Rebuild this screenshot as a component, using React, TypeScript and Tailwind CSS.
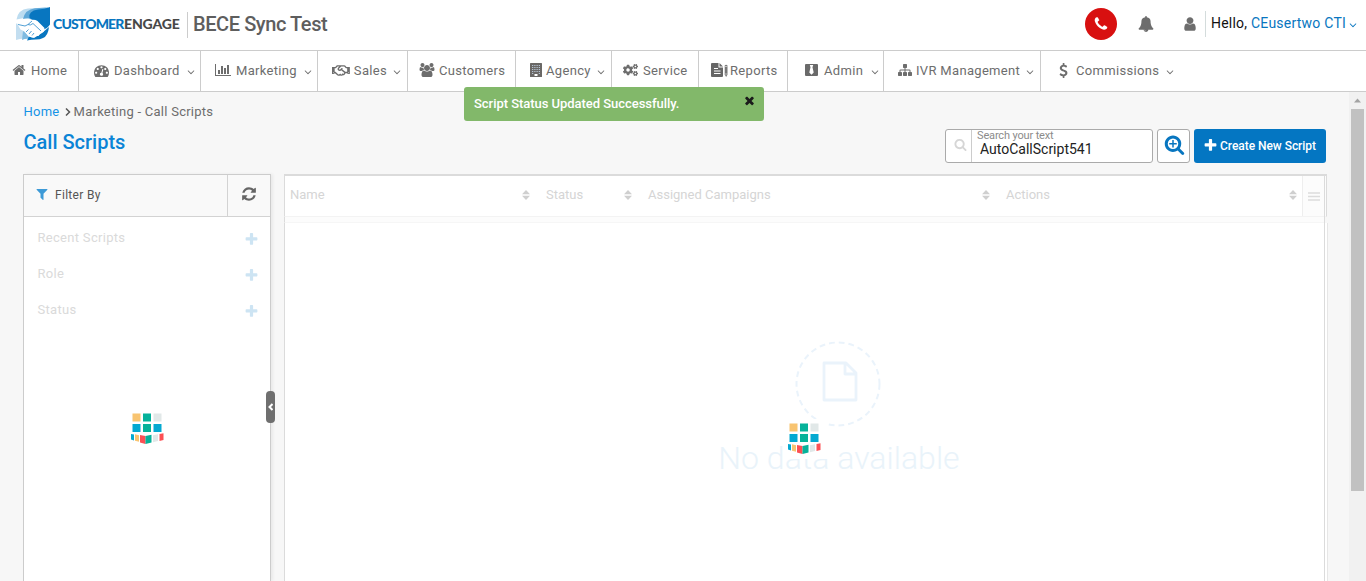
import React from "react";
import { FaCogs, FaRegHandshake } from "react-icons/fa";

const P = {
  home: "M1472 992v480q0 26-19 45t-45 19h-384v-384h-256v384h-384q-26 0-45-19t-19-45v-480q0-1 .5-3t.5-3l575-474 575 474q1 2 1 6zm223-69l-62 74q-8 9-21 11h-3q-13 0-21-7l-692-577-692 577q-12 8-24 7-13-2-21-11l-62-74q-8-10-7-23.5t11-21.5l719-599q32-26 76-26t76 26l244 204v-195q0-14 9-23t23-9h192q14 0 23 9t9 23v408l219 182q10 8 11 21.5t-7 23.5z",
  dash: "M384 1152q0-53-37.5-90.5t-90.5-37.5-90.5 37.5-37.5 90.5 37.5 90.5 90.5 37.5 90.5-37.5 37.5-90.5zm192-448q0-53-37.5-90.5t-90.5-37.5-90.5 37.5-37.5 90.5 37.5 90.5 90.5 37.5 90.5-37.5 37.5-90.5zm428 481l101-382q6-26-7.5-48.5t-38.5-29.5-48 6.5-30 39.5l-101 382q-60 5-107 43.5t-63 98.5q-20 77 20 146t117 89 146-20 89-117q16-60-6-117t-72-91zm660-33q0-53-37.5-90.5t-90.5-37.5-90.5 37.5-37.5 90.5 37.5 90.5 90.5 37.5 90.5-37.5 37.5-90.5zm-640-640q0-53-37.5-90.5t-90.5-37.5-90.5 37.5-37.5 90.5 37.5 90.5 90.5 37.5 90.5-37.5 37.5-90.5zm448 192q0-53-37.5-90.5t-90.5-37.5-90.5 37.5-37.5 90.5 37.5 90.5 90.5 37.5 90.5-37.5 37.5-90.5zm320 448q0 261-141 483-19 29-54 29h-1402q-35 0-54-29-141-221-141-483 0-182 71-348t191-286 286-191 348-71 348 71 286 191 191 286 71 348z",
  chart: "M640 896v512h-256v-512h256zm384-512v1024h-256v-1024h256zm1024 1152v128h-2048v-1536h128v1408h1920zm-640-896v768h-256v-768h256zm384-384v1152h-256v-1152h256z",
  sitemap: "M1792 1248v320q0 40-28 68t-68 28h-320q-40 0-68-28t-28-68v-320q0-40 28-68t68-28h96v-192h-512v192h96q40 0 68 28t28 68v320q0 40-28 68t-68 28h-320q-40 0-68-28t-28-68v-320q0-40 28-68t68-28h96v-192h-512v192h96q40 0 68 28t28 68v320q0 40-28 68t-68 28h-320q-40 0-68-28t-28-68v-320q0-40 28-68t68-28h96v-192q0-52 38-90t90-38h512v-192h-96q-40 0-68-28t-28-68v-320q0-40 28-68t68-28h320q40 0 68 28t28 68v320q0 40-28 68t-68 28h-96v192h512q52 0 90 38t38 90v192h96q40 0 68 28t28 68z",
  bell: "M912 1696q0-16-16-16-59 0-101.5-42.5t-42.5-101.5q0-16-16-16t-16 16q0 73 51.5 124.5t124.5 51.5q16 0 16-16zm816-288q0 52-38 90t-90 38h-448q0 106-75 181t-181 75-181-75-75-181h-448q-52 0-90-38t-38-90q50-42 91-88t85-119.5 74.5-158.5 50-206 19.5-260q0-152 117-282.5t307-158.5q-8-19-8-39 0-40 28-68t68-28 68 28 28 68q0 20-8 39 190 28 307 158.5t117 282.5q0 139 19.5 260t50 206 74.5 158.5 85 119.5 91 88z",
  user: "M1536 1399q0 109-62.5 187t-150.5 78h-854q-88 0-150.5-78t-62.5-187q0-85 8.5-160.5t31.5-152 58.5-131 94-89 134.5-34.5q131 128 313 128t313-128q76 0 134.5 34.5t94 89 58.5 131 31.5 152 8.5 160.5zm-256-887q0 159-112.5 271.5t-271.5 112.5-271.5-112.5-112.5-271.5 112.5-271.5 271.5-112.5 271.5 112.5 112.5 271.5z",
  phone: "M1600 1240q0 27-10 70.5t-21 68.5q-21 50-122 106-94 51-186 51-27 0-53-3.5t-57.5-12.5-47-14.5-55.5-20.5-49-18q-98-35-175-83-127-79-264-216t-216-264q-48-77-83-175-3-9-18-49t-20.5-55.5-14.5-47-12.5-57.5-3.5-53q0-92 51-186 56-101 106-122 25-11 68.5-21t70.5-10q14 0 21 3 18 6 53 76 11 19 30 54t35 63.5 31 53.5q3 4 17.5 25t21.5 35.5 7 28.5q0 20-28.5 50t-62 55-62 53-28.5 46q0 9 5 22.5t8.5 20.5 14 24 11.5 19q76 137 174 235t235 174q2 1 19 11.5t24 14 20.5 8.5 22.5 5q18 0 46-28.5t53-62 55-62 50-28.5q14 0 28.5 7t35.5 21.5 25 17.5q25 15 53.5 31t63.5 35 54 30q70 35 76 53 3 7 3 21z",
  filter: "M1595 295q17 41-14 70l-493 493v742q0 42-39 59-13 5-25 5-27 0-45-19l-256-256q-19-19-19-45v-486l-493-493q-31-29-14-70 17-39 59-39h1280q42 0 59 39z",
  refresh: "M1639 1056q0 5-1 7-64 268-268 434.5t-478 166.5q-146 0-282.5-55t-243.5-157l-129 129q-19 19-45 19t-45-19-19-45v-448q0-26 19-45t45-19h448q26 0 45 19t19 45-19 45l-137 137q71 66 161 102t187 36q134 0 250-65t186-179q11-17 53-117 8-23 30-23h192q13 0 22.5 9.5t9.5 22.5zm25-800v448q0 26-19 45t-45 19h-448q-26 0-45-19t-19-45 19-45l138-138q-148-137-349-137-134 0-250 65t-186 179q-11 17-53 117-8 23-30 23h-199q-13 0-22.5-9.5t-9.5-22.5v-7q65-268 270-434.5t480-166.5q146 0 284 55.5t245 156.5l130-129q19-19 45-19t45 19 19 45z",
  plus: "M1600 736v192q0 40-28 68t-68 28h-416v416q0 40-28 68t-68 28h-192q-40 0-68-28t-28-68v-416h-416q-40 0-68-28t-28-68v-192q0-40 28-68t68-28h416v-416q0-40 28-68t68-28h192q40 0 68 28t28 68v416h416q40 0 68 28t28 68z",
  search: "M1216 832q0-185-131.5-316.5t-316.5-131.5-316.5 131.5-131.5 316.5 131.5 316.5 316.5 131.5 316.5-131.5 131.5-316.5zm512 832q0 52-38 90t-90 38q-54 0-90-38l-343-342q-179 124-399 124-143 0-273.5-55.5t-225-150-150-225-55.5-273.5 55.5-273.5 150-225 225-150 273.5-55.5 273.5 55.5 225 150 150 225 55.5 273.5q0 220-124 399l343 343q37 37 37 90z",
  angle: "M1395 736q0 13-10 23l-466 466q-10 10-23 10t-23-10l-466-466q-10-10-10-23t10-23l50-50q10-10 23-10t23 10l393 393 393-393q10-10 23-10t23 10l50 50q10 10 10 23z",
  times: "M1490 1322q0 40-28 68l-136 136q-28 28-68 28t-68-28l-294-294-294 294q-28 28-68 28t-68-28l-136-136q-28-28-28-68t28-68l294-294-294-294q-28-28-28-68t28-68l136-136q28-28 68-28t68 28l294 294 294-294q28-28 68-28t68 28l136 136q28 28 28 68t-28 68l-294 294 294 294q28 28 28 68z",
  usd: "M1362 1185q0 153-99.5 263.5t-258.5 136.5v175q0 14-9 23t-23 9h-135q-13 0-22.5-9.5t-9.5-22.5v-175q-66-9-127.5-31t-101.5-44.5-74-48-46.5-37.5-17.5-18q-17-21-2-41l103-135q7-10 23-12 15-2 24 9l2 2q113 99 243 125 37 8 74 8 81 0 142.5-43t61.5-122q0-28-15-53t-33.5-42-58.5-37.5-66-32-80-32.5q-39-16-61.5-25t-61.5-26.5-62.5-31-56.5-35.5-53.5-42.5-43.5-49-35.5-58-21-66.5-8.5-78q0-138 98-242t255-134v-180q0-13 9.5-22.5t22.5-9.5h135q14 0 23 9t9 23v176q57 6 110.5 23t87 33.5 63.5 37.5 39 29 15 14q17 18 5 38l-81 146q-8 15-23 16-14 3-27-7-3-3-14.5-12t-39-26.5-58.5-32-74.5-26-85.5-11.5q-95 0-155 43t-60 111q0 26 8.5 48t29.5 41.5 39.5 33 56 31 60.5 27 70 27.5q53 20 81 31.5t76 35 75.5 42.5 62 50 53 63.5 31.5 76.5 13 94z",
  users: "M657 896q-162 5-265 128h-134q-82 0-138-40.5t-56-118.5q0-353 124-353 6 0 43.5 21t97.5 42.5 119 21.5q67 0 133-23-5 37-5 66 0 139 81 256zm1071 637q0 120-73 189.5t-194 69.5h-874q-121 0-194-69.5t-73-189.5q0-53 3.5-103.5t14-109 26.5-108.5 43-97.5 62-81 85.5-53.5 111.5-20q10 0 43 21.5t73 48 107 48 135 21.5 135-21.5 107-48 73-48 43-21.5q61 0 111.5 20t85.5 53.5 62 81 43 97.5 26.5 108.5 14 109 3.5 103.5zm-1024-1277q0 106-75 181t-181 75-181-75-75-181 75-181 181-75 181 75 75 181zm704 384q0 159-112.5 271.5t-271.5 112.5-271.5-112.5-112.5-271.5 112.5-271.5 271.5-112.5 271.5 112.5 112.5 271.5zm576 225q0 78-56 118.5t-138 40.5h-134q-103-123-265-128 81-117 81-256 0-29-5-66 66 23 133 23 59 0 119-21.5t97.5-42.5 43.5-21q124 0 124 353zm-128-609q0 106-75 181t-181 75-181-75-75-181 75-181 181-75 181 75 75 181z",
};

function Ico({ d, c = "", vb = "0 0 1792 1792" }: { d: string; c?: string; vb?: string }) {
  return (
    <svg viewBox={vb} className={"shrink-0 " + c} fill="currentColor">
      <path d={d} />
    </svg>
  );
}

function Building() {
  return (
    <svg viewBox="0 0 12 14" className="h-[14px] w-3 shrink-0">
      <rect width="12" height="14" rx=".5" fill="#6a6866" />
      {[2, 4, 6, 8, 10].map((y) =>
        [2.2, 4.4, 6.6, 8.8].map((x) =>
          y === 10 && x > 4 && x < 8 ? null : <rect key={x + "-" + y} x={x} y={y} width="1" height="1" fill="#c9dbee" />
        )
      )}
      <rect x="4.500" y="11" width="3" height="2" fill="#fff" />
    </svg>
  );
}

function ReportIcon() {
  return (
    <svg viewBox="0 0 17 14" className="h-[14px] w-[17px] shrink-0">
      <path d="M1 0h6.500v4.500h4.500V13q0 1-1 1H1Q0 14 0 13V1Q0 0 1 0zM8.500 0l3.500 3.500H8.500z" fill="#666" />
      <path d="M3 5.500h4M3 8h6.500M3 10.500h6.500" stroke="#fff" strokeWidth="1" />
      <path d="M13.700 2.500q1.400-1.500 2.800 0V11.500l-1.400 2.500-1.400-2.500z" fill="#777" />
      <path d="M13.500 3.500h3M13.500 11h3" stroke="#ddd" strokeWidth=".7" />
    </svg>
  );
}

function AdminIcon() {
  return (
    <svg viewBox="0 0 13 12" className="h-3 w-[13px] shrink-0">
      <rect width="13" height="12" rx="1" fill="#6a6a6a" />
      <path d="M4.800 1h3.400l-.7 2.200 1.200 5.300-2.200 2.300-2.200-2.300 1.200-5.300z" fill="#fff" />
    </svg>
  );
}

function Nav({ w, pl, gap, icon, label, arrow, last }: { w: string; pl: string; gap: string; icon: React.ReactNode; label: string; arrow?: boolean; last?: boolean }) {
  return (
    <div className={`flex h-full shrink-0 items-center pb-[2px] ${w} ${pl} ${gap} ${last ? "" : "border-r border-[#ccc]"}`}>
      {icon}
      <span className="mt-[2px] whitespace-nowrap">{label}</span>
      {arrow && <Ico d={P.angle} c="mt-[3px] mr-[4px] ml-auto h-[12px] w-[12px]" />}
    </div>
  );
}

function Logo() {
  return (
    <svg viewBox="0 0 36 34" className="h-[34px] w-9 shrink-0">
      <path d="M.5 12.500Q2 2.500 12 1.500L30 .5 18 14 8 11z" fill="#bcdcf0" />
      <path d="M7 12Q9 2.500 19 1.200L32 .5 20 14 12 11z" fill="#5fa8d8" />
      <path d="M13.500 11Q12 4 22 2.500 29 2 34 0v17.500q-2.500 4-7.500 5.500L19 14z" fill="#0876c0" />
      <path d="M0 16.500l4 .5 6 8v6.500Q5 31 0 33z" fill="#c3def0" />
      <path d="M7 24l7 5v3Q10 31 6 33z" fill="#7fbbe1" />
      <path d="M13 29.500l5 1.500 8-5 7-6q-1 9-6 11-3 1.500-7 1.500-5 0-9 1z" fill="#0876c0" />
      <path d="M1 16.500q5 0 9.500-4 3-1 5 .5 3-1 6 1l7 7-1 4-3 1-2 3-3 0-3 1.500-4-1-4-5-4-2z" fill="#fff" />
      <path d="M16 14l-4 3.500q2 1.500 5-1l8 7.500M12.500 22.500l-2.500 2.500M15.500 24l-2.500 3M18 26l-2 2.500M2 17.500l7 1.500 3-1.500" stroke="#3d94cf" strokeWidth=".9" fill="none" />
    </svg>
  );
}

function Loader() {
  return (
    <svg viewBox="0 0 34 32" className="h-8 w-[34px]">
      <rect x="1.500" y="0.500" width="8" height="8" fill="#f8c471" />
      <rect x="12" y="0.500" width="8" height="8" fill="#06b29a" />
      <rect x="22.500" y="0.500" width="8" height="8" fill="#e1e8e8" />
      <rect x="1.500" y="11" width="8" height="8" fill="#04a9d1" />
      <rect x="12" y="11" width="8" height="8" fill="#06b29a" />
      <rect x="22.500" y="11" width="8" height="8" fill="#04a9d1" />
      <path d="M0 21l3 .5v6L0 26.500z" fill="#04a9d1" />
      <path d="M4 21.200l4 1v6.500L4 27.700z" fill="#f8c471" />
      <path d="M9 22l5.500 1v8L9 29.500z" fill="#fc5054" />
      <path d="M14.500 23l6-1.200v7.700l-6 1.500z" fill="#06b29a" />
      <path d="M22 22.200l5-1v6.800l-5 1.300z" fill="#e1e8e8" />
      <path d="M28.500 21l4-.7v6.700l-4 1z" fill="#fc5054" />
    </svg>
  );
}

function Sort() {
  return (
    <svg viewBox="0 0 8 10" className="h-[10px] w-2 shrink-0" fill="#cfcfcf">
      <path d="M4 0l4 4.200H0zM4 10L0 5.800h8z" />
    </svg>
  );
}

function Col({ w, label, pr }: { w: string; label: string; pr: string }) {
  return (
    <div className={`flex shrink-0 items-center justify-between pl-[5px] ${w} ${pr}`}>
      <span>{label}</span>
      <Sort />
    </div>
  );
}

const i14 = "h-[14px] w-[14px]";

export default function App() {
  return (
    <div className="relative flex h-[581px] w-[1366px] flex-col overflow-hidden bg-[#f7f7f7] font-['Roboto',sans-serif] text-[13px] text-[#6d6d6d]">
      <header className="flex h-[50px] shrink-0 items-center bg-white pl-4">
        <div className="flex h-full w-[171px] shrink-0 items-center pb-[3px]">
          <Logo />
          <div className="ml-[1px] flex shrink-0 font-['Lato',sans-serif] text-[14px] leading-5 font-black whitespace-nowrap">
            <span className="w-[71px] tracking-[-0.85px] text-[#0876c0]">CUSTOMER</span>
            <span className="tracking-[-0.15px] text-[#484848]">ENGAGE</span>
          </div>
        </div>
        <div className="mb-[1px] h-[26px] w-px bg-[#ccc]" />
        <h1 className="mb-[2px] ml-[5px] text-[20px] leading-6 font-medium tracking-[-0.42px] text-[#5e5e5e]">BECE Sync Test</h1>
        <div className="ml-auto flex items-center pr-[7px] pb-[3px]">
          <div className="mt-[1px] flex h-8 w-8 items-center justify-center rounded-full bg-[#d81010] text-white">
            <Ico d={P.phone} c="h-4 w-4" />
          </div>
          <Ico d={P.bell} c="ml-[21px] h-4 w-4" />
          <Ico d={P.user} c="mr-[-1px] ml-[28px] h-4 w-4" />
          <div className="ml-[8px] h-[26px] w-px bg-[#d4dcdc]" />
          <span className="ml-[5px] text-[14px] tracking-[0.23px] text-[#111]">Hello, <span className="text-[#0876c0]">CEusertwo CTI</span></span>
          <Ico d={P.angle} c="ml-[1px] mt-[2px] h-[12px] w-[12px] text-[#0876c0]" />
        </div>
      </header>
      <nav className="flex h-[42px] shrink-0 border-y border-[#ccc] bg-white tracking-[0.32px]">
        <Nav w="w-[79px]" pl="pl-3" gap="gap-[5px]" icon={<Ico d={P.home} c={i14} />} label="Home" />
        <Nav w="w-[122px]" pl="pl-[15px]" gap="gap-[5px]" icon={<Ico d={P.dash} c="h-[15px] w-[15px]" />} label="Dashboard" arrow />
        <Nav w="w-[117px]" pl="pl-[14px]" gap="gap-[5px]" icon={<Ico d={P.chart} vb="0 0 2048 1792" c="h-[14px] w-4" />} label="Marketing" arrow />
        <Nav w="w-[90px]" pl="pl-[14px]" gap="gap-[4px]" icon={<FaRegHandshake className="h-[15px] w-[18px]" />} label="Sales" arrow />
        <Nav w="w-[108px]" pl="pl-[11px]" gap="gap-[4px]" icon={<Ico d={P.users} vb="64 0 1920 1792" c="h-[14px] w-4" />} label="Customers" />
        <Nav w="w-[96px]" pl="pl-[14px]" gap="gap-[4px]" icon={<Building />} label="Agency" arrow />
        <Nav w="w-[87px]" pl="pl-[11px]" gap="gap-[5px]" icon={<FaCogs className="h-[14px] w-[15px]" />} label="Service" />
        <Nav w="w-[89px]" pl="pl-[12px]" gap="gap-[2px]" icon={<ReportIcon />} label="Reports" />
        <Nav w="w-[96px]" pl="pl-[17px]" gap="gap-[6px]" icon={<AdminIcon />} label="Admin" arrow />
        <Nav w="w-[157px]" pl="pl-[14px]" gap="gap-[4px]" icon={<Ico d={P.sitemap} c={i14} />} label="IVR Management" arrow />
        <Nav w="w-[138px]" pl="pl-[15px]" gap="gap-[5px]" icon={<Ico d={P.usd} c="h-[15px] w-[15px]" />} label="Commissions" arrow last />
      </nav>
      <div className="flex min-h-0 flex-1">
        <main className="flex min-w-0 flex-1 flex-col pl-[23px]">
          <div className="flex h-[38px] items-center pt-[2px] pl-[0.5px] text-[13px] tracking-[0.26px]">
            <span className="text-[#1593e6]">Home</span>
            <svg viewBox="0 0 6 8" className="mr-[3px] ml-[5px] h-2 w-[6px]"><path d="M1 .5L4.500 4 1 7.500" fill="none" stroke="#555" strokeWidth="1.500" /></svg>
            <span>Marketing - Call Scripts</span>
          </div>
          <div className="flex h-11 items-start pr-[23px]">
            <h2 className="pl-[0.5px] text-[20px] leading-6 font-medium text-[#0a84d6]">Call Scripts</h2>
            <div className="mt-[-1px] ml-auto flex h-[34px] w-[208px] rounded-[3px] border border-[#aaa] bg-white">
              <div className="flex w-[26px] items-center justify-center border-r border-[#ccc] text-[#d6d6d6]">
                <Ico d={P.search} c="mb-[3px] ml-[3px] h-[13px] w-[13px]" />
              </div>
              <div className="flex flex-col pl-[5px]">
                <span className="text-[11px] leading-[11px] tracking-[-0.15px] text-[#8b8b8b]">Search your text</span>
                <span className="pt-px pl-[3px] text-[14px] leading-[15px] text-[#222]">AutoCallScript541</span>
              </div>
            </div>
            <div className="mt-[-1px] ml-1 flex h-[34px] w-[33px] items-center justify-center rounded-[3px] border border-[#aaa] bg-white text-[#0876c0]">
              <svg viewBox="0 0 1792 1792" className="mb-[3px] ml-[2px] h-[21px] w-[21px]" fill="currentColor"><path d={P.search} /><path d="M704 512h128v640H704zM448 768h640v128H448z" /></svg>
            </div>
            <button className="mt-[-1px] ml-1 flex h-[34px] w-[132px] items-center rounded-[3px] bg-[#0476c2] pl-[9px] text-[12px] font-medium tracking-[-0.04px] text-white">
              <Ico d={P.plus} c="mr-[2px] mb-[2px] h-[15px] w-[15px]" />
              <span className="whitespace-nowrap">Create New Script</span>
            </button>
          </div>
          <div className="flex min-h-0 flex-1">
            <aside className="relative flex w-[248px] shrink-0 flex-col border border-b-0 border-[#ccc] bg-white shadow-[2px_0_3px_rgba(0,0,0,0.06)]">
              <div className="flex h-[42px] shrink-0 border-b border-[#d3d3d3] bg-[#f9f9f9]">
                <div className="flex flex-1 items-center pb-px pl-[11px] text-[12px] tracking-[0.3px] text-[#555]">
                  <Ico d={P.filter} c="mr-[6px] mb-[2px] h-[14px] w-[14px] text-[#3d9ad7]" />
                  Filter By
                </div>
                <div className="flex w-[43px] items-center justify-center border-l border-[#d3d3d3]"><Ico d={P.refresh} c="mb-[3px] h-4 w-4 text-[#666]" /></div>
              </div>
              <div className="flex flex-col pt-[3px] text-[13px] tracking-[0.3px] text-[#dadada]">
                {["Recent Scripts", "Role", "Status"].map((t) => (
                  <div key={t} className="flex h-9 items-center justify-between pr-[11px] pl-[13.5px]">
                    <span>{t}</span>
                    <Ico d={P.plus} c="mt-[2px] h-[15px] w-[15px] text-[#cde4f3]" />
                  </div>
                ))}
              </div>
              <div className="absolute top-[238px] left-[107px]"><Loader /></div>
              <div className="absolute top-[216px] right-[-5px] flex h-8 w-[9px] items-center justify-center rounded-[4px] bg-[#6f6f6f]">
                <svg viewBox="0 0 5 8" className="h-2 w-[5px]"><path d="M4.500 1L1.500 4l3 3" fill="none" stroke="#fff" strokeWidth="2" /></svg>
              </div>
            </aside>
            <section className="relative ml-[13px] flex w-[1043px] shrink-0 flex-col">
              <div className="flex h-[43px] shrink-0 border-t-2 border-r border-b border-l border-[#dbdbdb] border-b-[#f3f3f3] bg-white text-[13px] text-[#d5d5d5]">
                <Col w="w-[256px]" pr="pr-[11px] pb-[3px]" label="Name" />
                <Col w="w-[102px]" pr="pr-[11px] pb-[3px]" label="Status" />
                <Col w="w-[358px]" pr="pr-[11px] pb-[3px]" label="Assigned Campaigns" />
                <Col w="w-[301px]" pr="pr-[5px] pb-[3px]" label="Actions" />
                <div className="flex flex-1 items-center border-l border-[#eee] bg-[#fcfcfc] pl-[5px]">
                  <svg viewBox="0 0 12 9" className="h-[9px] w-3"><path d="M0 1h12M0 4.500h12M0 8h12" stroke="#dcdcdc" strokeWidth="1.500" /></svg>
                </div>
              </div>
              <div className="h-[6px] w-[1041px] shrink-0 border-b border-l border-b-[#f6f6f6] border-l-[#dbdbdb] bg-[#fcfcfc]" />
              <div className="mr-[-1px] flex flex-1 flex-col items-center border-r border-l border-[#dbdbdb] border-r-[#e6e6e6] bg-white pt-[118px] pl-[66px]">
                <svg viewBox="0 0 86 86" className="mr-[3px] h-[86px] w-[86px]" fill="none" stroke="#eaf3fb">
                  <circle cx="43" cy="43" r="41.500" strokeWidth="2" strokeDasharray="5.800 4" />
                  <path d="M29 22h22l10 10v27H29zM50 22v11h11" strokeWidth="2.800" strokeLinejoin="round" />
                </svg>
                <div className="mt-[12px] text-[32px] leading-[38px] font-light tracking-[0.03px] text-[#e9f3fa]">No data available</div>
              </div>
              <div className="absolute top-[1px] right-[2px] bottom-0 w-px bg-[#dbdbdb]" />
              <div className="absolute top-[245px] left-[500px] flex h-10 w-11 justify-center bg-white pt-[4px] pr-[2px]"><Loader /></div>
            </section>
          </div>
        </main>
        <div className="flex w-[17px] shrink-0 flex-col items-center bg-[#f1f1f1]">
          <svg viewBox="0 0 17 17" className="h-[17px] w-[17px]"><path d="M8.500 6.500l3.500 4H5z" fill="#a3a3a3" /></svg>
          <div className="h-[382px] w-[13px] bg-[#c1c1c1]" />
        </div>
      </div>
      <div className="absolute top-[87px] left-[464px] flex h-[34px] w-[300px] items-center rounded-[3px] bg-[#82b86a] pb-px pl-[10px] text-[13px] font-medium tracking-[-0.04px] text-white">
        Script Status Updated Successfully.
        <Ico d={P.times} c="mr-[8px] mb-[6px] ml-auto h-[13px] w-[13px] text-[#1b1b1b]" />
      </div>
    </div>
  );
}
